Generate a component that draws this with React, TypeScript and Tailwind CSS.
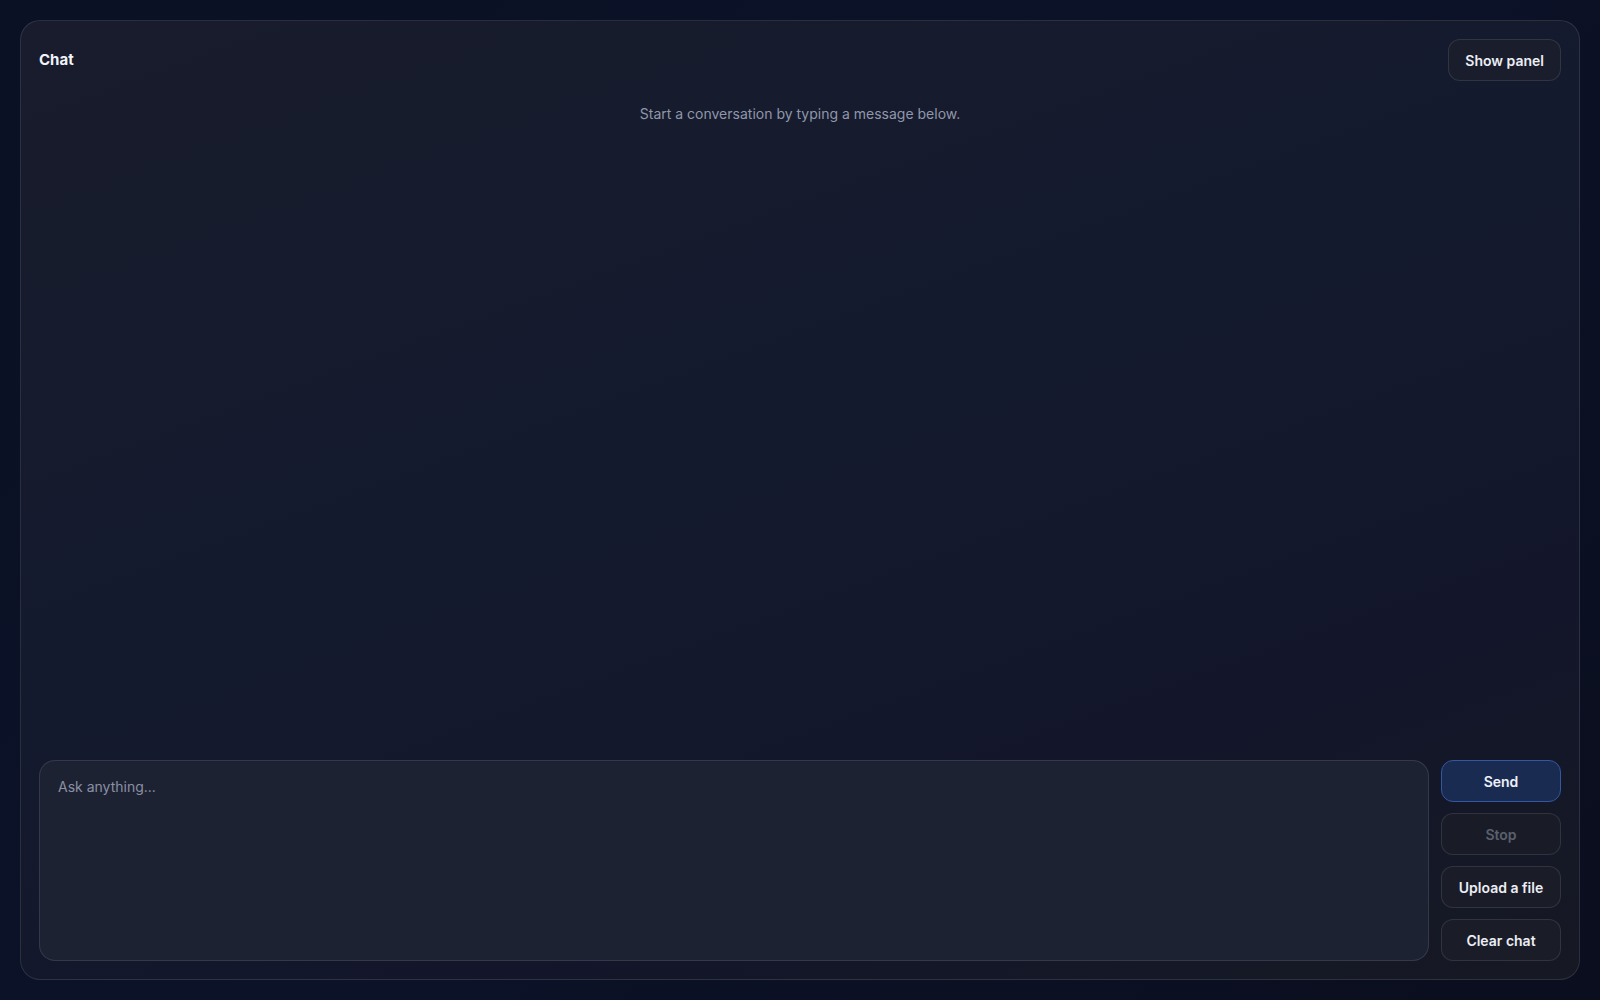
const buttonBase =
  "h-[42px] w-full rounded-xl border text-[14px] font-semibold transition-colors"

export default function App() {
  return (
    <div
      className="flex h-[1000px] w-[1600px] bg-[linear-gradient(135deg,#0b1124_0%,#0c1228_50%,#0a0e1e_100%)] p-5 text-white"
      style={{ fontFamily: "Inter, 'Noto Sans', 'Liberation Sans', sans-serif" }}
    >
      <div className="flex flex-1 flex-col rounded-[20px] border border-white/10 bg-[linear-gradient(160deg,#181c2c_0%,#141a2e_45%,#13162a_75%,#161923_100%)] p-[18px]">
        <div className="flex items-center justify-between">
          <h1 className="text-[15px] font-bold text-[#f1f3f8]">Chat</h1>
          <button className="h-[42px] rounded-xl border border-white/10 bg-[#1a1e2c] px-4 text-[14px] font-semibold text-[#eceef4]">
            Show panel
          </button>
        </div>

        <div className="flex-1 pt-[23px]">
          <p className="text-center text-[14px] leading-5 text-[#9097ab]">
            Start a conversation by typing a message below.
          </p>
        </div>

        <div className="flex gap-3">
          <div className="h-[201px] flex-1 rounded-2xl border border-white/10 bg-[#1d2233] px-[18px] py-4">
            <textarea
              placeholder="Ask anything..."
              className="h-full w-full resize-none bg-transparent text-[14px] leading-5 text-white outline-none placeholder:text-[#8a90a2]"
            />
          </div>
          <div className="flex w-[120px] flex-col gap-[11px]">
            <button className={`${buttonBase} border-[#3357a0] bg-[#1a2b52] text-[#eef1f8]`}>
              Send
            </button>
            <button disabled className={`${buttonBase} border-white/10 bg-[#191c27] text-[#5b606e]`}>
              Stop
            </button>
            <button className={`${buttonBase} border-white/10 bg-[#1a1d28] text-[#eceef4]`}>
              Upload a file
            </button>
            <button className={`${buttonBase} border-white/10 bg-[#1a1d28] text-[#eceef4]`}>
              Clear chat
            </button>
          </div>
        </div>
      </div>
    </div>
  )
}
